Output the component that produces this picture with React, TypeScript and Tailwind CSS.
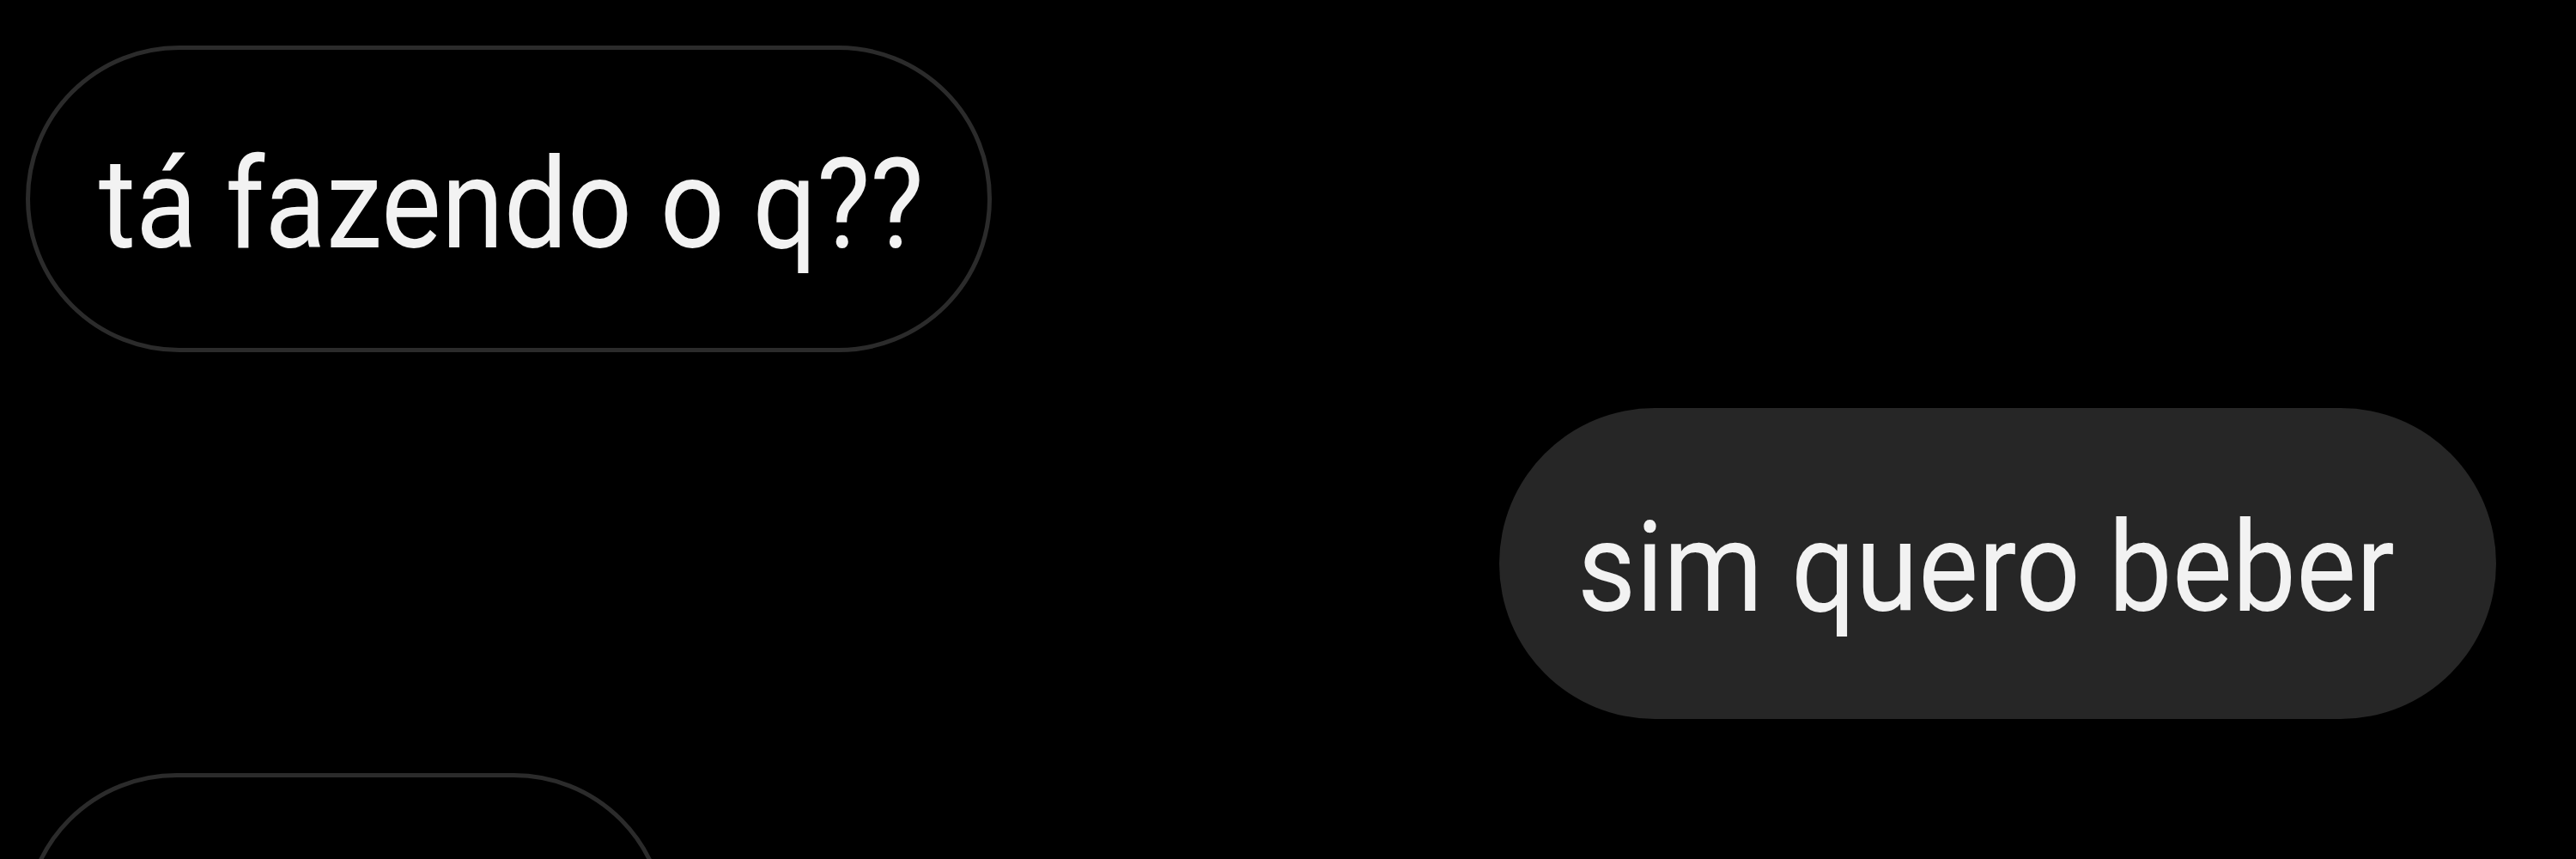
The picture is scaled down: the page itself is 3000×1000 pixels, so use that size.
import React from "react";

export default function App() {
  return (
    <div
      className="w-[3000px] h-[1000px] overflow-hidden bg-black flex flex-col"
      style={{ fontFamily: "Roboto, 'Noto Sans', Arial, sans-serif" }}
    >
      <div className="mt-[53px] ml-[30px] w-[1125px] h-[357px] rounded-full border-[5px] border-[#2b2b2b] flex items-center pl-[80px] shrink-0">
        <span className="inline-block origin-left scale-x-[0.902] text-[146px] leading-none text-[#f2f2f2] pt-[14px] whitespace-nowrap">tá fazendo o q??</span>
      </div>
      <div className="mt-[65px] self-end mr-[93px] w-[1161px] h-[362px] rounded-full bg-[#262626] flex items-center pl-[91px] shrink-0">
        <span className="inline-block origin-left scale-x-[0.905] text-[146px] leading-none text-[#f2f2f2] pt-[12px] whitespace-nowrap">sim quero beber</span>
      </div>
      <div className="mt-[63px] ml-[27px] w-[750px] h-[357px] rounded-full border-[5px] border-[#2b2b2b] shrink-0" />
    </div>
  );
}
